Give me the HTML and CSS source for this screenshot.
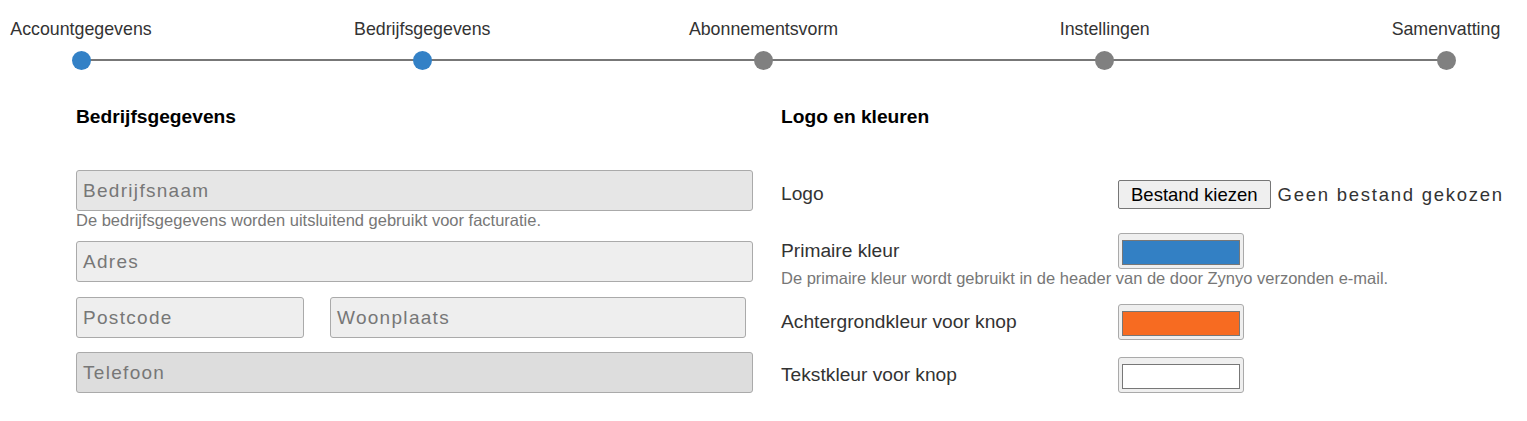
FILE: index.html
```html
<!DOCTYPE html>
<html lang="nl">
<head>
<meta charset="utf-8">
<title>Bedrijfsgegevens</title>
<link rel="stylesheet" href="styles.css">
</head>
<body>
<div class="stepper">
  <div class="step done"><span class="step-label">Accountgegevens</span><span class="dot"></span></div>
  <div class="step done"><span class="step-label">Bedrijfsgegevens</span><span class="dot"></span></div>
  <div class="step"><span class="step-label">Abonnementsvorm</span><span class="dot"></span></div>
  <div class="step"><span class="step-label">Instellingen</span><span class="dot"></span></div>
  <div class="step"><span class="step-label">Samenvatting</span><span class="dot"></span></div>
</div>
<div class="content">
  <section class="col">
    <h2 class="heading">Bedrijfsgegevens</h2>
    <div class="field f1"><span class="ph">Bedrijfsnaam</span></div>
    <div class="help">De bedrijfsgegevens worden uitsluitend gebruikt voor facturatie.</div>
    <div class="field f2"><span class="ph">Adres</span></div>
    <div class="pair">
      <div class="field f2 postcode"><span class="ph">Postcode</span></div>
      <div class="field f2 city"><span class="ph">Woonplaats</span></div>
    </div>
    <div class="field f3"><span class="ph">Telefoon</span></div>
  </section>
  <section class="col right">
    <h2 class="heading">Logo en kleuren</h2>
    <div class="row logo-row">
      <span class="label">Logo</span>
      <div class="file"><span class="file-btn">Bestand kiezen</span><span class="file-name">Geen bestand gekozen</span></div>
    </div>
    <div class="row color-row first">
      <span class="label">Primaire kleur</span>
      <div class="color"><span class="swatch blue"></span></div>
    </div>
    <div class="help help-right">De primaire kleur wordt gebruikt in de header van de door Zynyo verzonden e-mail.</div>
    <div class="row color-row">
      <span class="label">Achtergrondkleur voor knop</span>
      <div class="color"><span class="swatch orange"></span></div>
    </div>
    <div class="row color-row">
      <span class="label">Tekstkleur voor knop</span>
      <div class="color"><span class="swatch white"></span></div>
    </div>
  </section>
</div>
</body>
</html>
```
FILE: styles.css
```css
* { box-sizing: border-box; }
html, body { margin: 0; padding: 0; background: #fff; }
body {
  font-family: "Liberation Sans", Arial, sans-serif;
  color: #333;
  width: 1527px;
  height: 421px;
  overflow: hidden;
}
.stepper {
  position: relative;
  display: flex;
  justify-content: space-between;
  padding-top: 18px;
}
.stepper::before {
  content: "";
  position: absolute;
  left: 81px;
  right: 81px;
  top: 59px;
  height: 2px;
  background: #777;
}
.step {
  width: 162px;
  display: flex;
  flex-direction: column;
  align-items: center;
  position: relative;
}
.step-label {
  font-size: 17.8px;
  line-height: 22px;
  white-space: nowrap;
  color: #333;
}
.dot {
  width: 19px;
  height: 19px;
  border-radius: 50%;
  background: #808080;
  margin-top: 11px;
}
.step.done .dot { background: #3381c6; }

.content {
  display: grid;
  grid-template-columns: 677px 677px;
  column-gap: 28px;
  padding-left: 76px;
  margin-top: 36px;
}
.heading {
  margin: 0;
  font-size: 19.2px;
  line-height: 22px;
  font-weight: bold;
  color: #000;
}
.field {
  height: 41px;
  border: 1px solid #aaa;
  border-radius: 3px;
  display: flex;
  align-items: center;
  padding-left: 6px;
}
.ph {
  font-size: 19px;
  letter-spacing: 1.3px;
  color: #777;
}
.f1 { background: #e6e6e6; margin-top: 42px; }
.f2 { background: #eee; }
.f3 { background: #ddd; margin-top: 14px; }
.help {
  font-size: 16.5px;
  line-height: 19px;
  color: #777;
  margin: 0 0 11px;
}
.pair {
  display: flex;
  margin-top: 15px;
}
.postcode { width: 228px; }
.city { width: 416px; margin-left: 26px; }

.right .row {
  display: flex;
  align-items: center;
}
.label {
  width: 337px;
  flex-shrink: 0;
  font-size: 19.2px;
  color: #333;
  white-space: nowrap;
}
.logo-row { margin-top: 52px; }
.logo-row .label { margin-top: -1px; }
.file { display: flex; align-items: center; flex-shrink: 0; }
.file-btn {
  height: 29px;
  padding: 0 12px;
  display: flex;
  align-items: center;
  background: #efefef;
  border: 1px solid #767676;
  border-radius: 2px;
  font-size: 18.5px;
  color: #000;
  white-space: nowrap;
}
.file-name {
  margin-left: 7px;
  font-size: 18.5px;
  letter-spacing: 1.75px;
  color: #333;
  white-space: nowrap;
}
.color-row.first { margin-top: 24px; }
.color-row { margin-top: 17px; }
.color {
  width: 126px;
  height: 36px;
  background: #efefef;
  border: 1px solid #aaa;
  border-radius: 3px;
  padding: 6px 3px 3px;
  display: flex;
}
.swatch {
  flex: 1;
  border: 1px solid #777;
}
.swatch.blue { background: #3380c4; }
.swatch.orange { background: #f76b21; }
.swatch.white { background: #fff; }
.help-right { margin: 0; line-height: 18px; }
.help-right + .color-row { margin-top: 17px; }
```
